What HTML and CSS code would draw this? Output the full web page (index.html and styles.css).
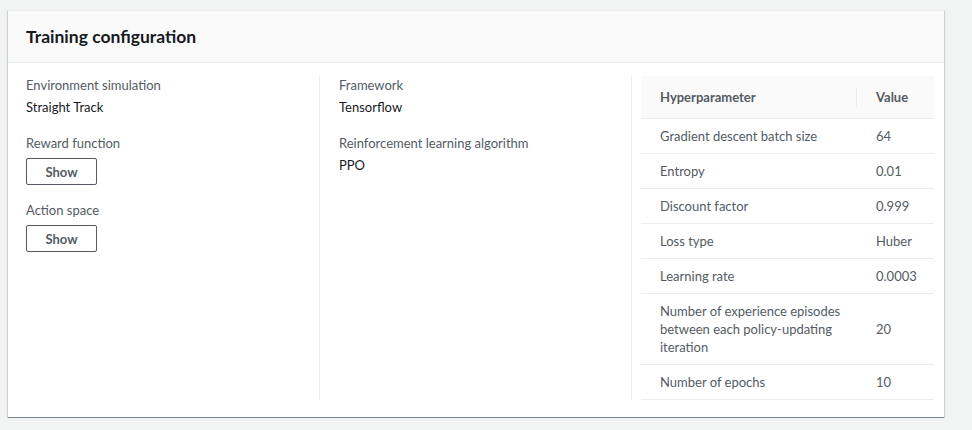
FILE: index.html
```html
<!DOCTYPE html>
<html lang="en">
<head>
<meta charset="utf-8">
<title>Training configuration</title>
<link rel="stylesheet" href="styles.css">
</head>
<body>
<section class="card">
  <header class="card-header">
    <h2 class="card-title">Training configuration</h2>
  </header>
  <div class="card-body">
    <div class="col col-first">
      <div class="field">
        <div class="label">Environment simulation</div>
        <div class="value">Straight Track</div>
      </div>
      <div class="field">
        <div class="label">Reward function</div>
        <button class="btn" type="button">Show</button>
      </div>
      <div class="field">
        <div class="label">Action space</div>
        <button class="btn" type="button">Show</button>
      </div>
    </div>
    <div class="col col-mid">
      <div class="field">
        <div class="label">Framework</div>
        <div class="value">Tensorflow</div>
      </div>
      <div class="field">
        <div class="label">Reinforcement learning algorithm</div>
        <div class="value">PPO</div>
      </div>
    </div>
    <div class="col col-table">
      <table class="hp-table">
        <colgroup>
          <col class="c-name">
          <col>
        </colgroup>
        <thead>
          <tr>
            <th><span class="th-inner th-sep">Hyperparameter</span></th>
            <th><span class="th-inner">Value</span></th>
          </tr>
        </thead>
        <tbody>
          <tr><td>Gradient descent batch size</td><td>64</td></tr>
          <tr><td>Entropy</td><td>0.01</td></tr>
          <tr><td>Discount factor</td><td>0.999</td></tr>
          <tr><td>Loss type</td><td>Huber</td></tr>
          <tr><td>Learning rate</td><td>0.0003</td></tr>
          <tr><td>Number of experience episodes between each policy-updating iteration</td><td>20</td></tr>
          <tr><td>Number of epochs</td><td>10</td></tr>
        </tbody>
      </table>
    </div>
  </div>
</section>
</body>
</html>
```
FILE: styles.css
```css
* { box-sizing: border-box; }

html, body {
  margin: 0;
  background: #f2f3f3;
}

body {
  padding: 10px 28px 0 8px;
  font-family: "Lato", "Liberation Sans", sans-serif;
  font-size: 13px;
  color: #16191f;
}

.card {
  background: #fff;
  border-top: 1px solid #eaeded;
  border-bottom: 1px solid #7d8990;
  box-shadow: 0 1px 1px 0 rgba(0, 28, 36, 0.15), 1px 1px 1px 0 rgba(0, 28, 36, 0.12), -1px 1px 1px 0 rgba(0, 28, 36, 0.12);
}

.card-header {
  height: 52px;
  background: #fafafa;
  border-bottom: 1px solid #eaeded;
  display: flex;
  align-items: center;
  padding: 0 18px;
}

.card-title {
  margin: 0;
  font-size: 17.5px;
  font-weight: 700;
  line-height: 22px;
  color: #16191f;
}

.card-body {
  display: grid;
  grid-template-columns: 311px 312px 1fr;
  padding: 13px 0 17px;
}

.col-first { padding: 0 18px; }
.col-mid { padding: 0 19px; border-left: 1px solid #eaeded; }
.col-table { padding: 0 10px 0 9px; border-left: 1px solid #eaeded; }

.field + .field { margin-top: 16px; }

.label {
  color: #545b64;
  line-height: 18px;
}

.value {
  margin-top: 2px;
  line-height: 22px;
  color: #16191f;
}

.btn {
  display: block;
  margin-top: 5px;
  width: 71px;
  height: 27px;
  padding: 0;
  background: #fff;
  border: 1px solid #545b64;
  border-radius: 2px;
  font-family: inherit;
  font-size: 13px;
  font-weight: 700;
  color: #545b64;
}

.field + .field .btn { margin-top: 6px; }

.hp-table {
  width: 100%;
  table-layout: fixed;
  border-collapse: collapse;
  color: #545b64;
}

.c-name { width: 216px; }

.hp-table th {
  background: #fafafa;
  height: 42px;
  padding: 0;
  text-align: left;
  font-weight: 700;
  border-bottom: 1px solid #eaeded;
}

.th-inner {
  display: block;
  padding: 0 19px;
  line-height: 20px;
}

.th-sep { border-right: 1px solid #eaeded; }

.hp-table td {
  padding: 8px 10px 8px 19px;
  line-height: 18px;
  border-bottom: 1px solid #eaeded;
  vertical-align: middle;
}
```
